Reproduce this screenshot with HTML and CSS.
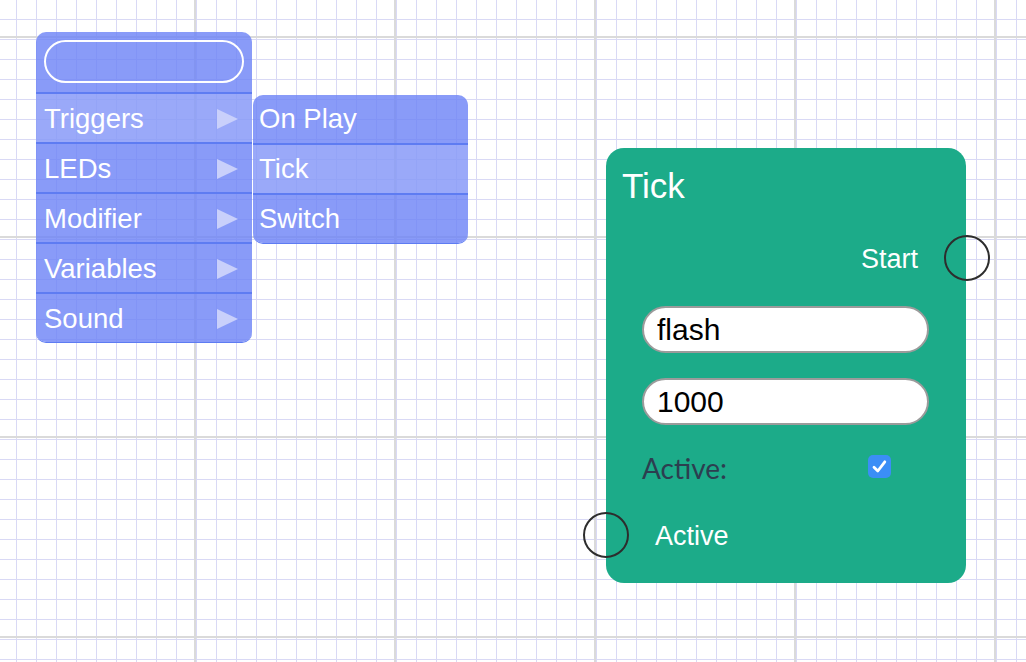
FILE: index.html
```html
<!DOCTYPE html>
<html>
<head>
<meta charset="utf-8">
<link rel="stylesheet" href="styles.css">
</head>
<body>
<div class="canvas">
  <div class="menu">
    <div class="menu-search"><input class="search-input" type="text" value=""></div>
    <div class="menu-row active"><span>Triggers</span><span class="arrow"></span></div>
    <div class="menu-row"><span>LEDs</span><span class="arrow"></span></div>
    <div class="menu-row"><span>Modifier</span><span class="arrow"></span></div>
    <div class="menu-row"><span>Variables</span><span class="arrow"></span></div>
    <div class="menu-row"><span>Sound</span><span class="arrow"></span></div>
  </div>
  <div class="submenu">
    <div class="sub-row first"><span>On Play</span></div>
    <div class="sub-row active"><span>Tick</span></div>
    <div class="sub-row"><span>Switch</span></div>
  </div>

  <div class="node">
    <div class="node-title">Tick</div>
    <div class="node-output">
      <span>Start</span>
      <span class="socket socket-right"></span>
    </div>
    <input class="node-input first" type="text" value="flash">
    <input class="node-input" type="text" value="1000">
    <div class="node-option">
      <span class="option-label">Active:</span>
      <span class="checkbox"><svg width="23" height="23" viewBox="0 0 23 23"><path d="M6 12.2 L9.8 16 L16.8 6.8" fill="none" stroke="#fff" stroke-width="2.8" stroke-linecap="round" stroke-linejoin="round"/></svg></span>
    </div>
    <div class="node-input-socket">
      <span class="socket socket-left"></span>
      <span>Active</span>
    </div>
  </div>
</div>
</body>
</html>
```

FILE: styles.css
```css
html, body {
  margin: 0;
  padding: 0;
  width: 100%;
  height: 100%;
  overflow: hidden;
  background: #fff;
  font-family: "Liberation Sans", Arial, sans-serif;
}

.canvas {
  position: relative;
  width: 1026px;
  height: 662px;
  background-color: #fff;
  background-image:
    linear-gradient(to right, #dadada 2px, transparent 2px),
    linear-gradient(to bottom, #dadada 2px, transparent 2px),
    linear-gradient(to right, #d9d9f5 1px, transparent 1px),
    linear-gradient(to bottom, #d9d9f5 1px, transparent 1px);
  background-size: 200px 200px, 200px 200px, 20px 20px, 20px 20px;
  background-position: 194px 0, 0 36px, 16px 0, 0 19px;
}

/* context menu */
.menu {
  position: absolute;
  left: 36px;
  top: 32px;
  width: 216px;
  border-radius: 10px;
  background: rgba(108, 130, 246, 0.8);
  box-shadow: 0 1px 0 #5e7cf2;
  color: #fff;
  font-size: 27.5px;
}

.menu-search {
  height: 60px;
  padding: 8px;
  box-sizing: border-box;
}

.search-input {
  display: block;
  width: 200px;
  height: 43px;
  box-sizing: border-box;
  border: 2px solid #fff;
  border-radius: 22px;
  background: transparent;
  outline: none;
  padding: 0 14px;
  font: inherit;
  color: #fff;
}

.menu-row {
  height: 50px;
  box-sizing: border-box;
  border-top: 2px solid #5e7cf2;
  display: flex;
  align-items: center;
  justify-content: space-between;
  padding: 1px 14px 0 8px;
}

.menu-row:last-child {
  border-bottom-left-radius: 10px;
  border-bottom-right-radius: 10px;
}

.active {
  background: rgba(255, 255, 255, 0.15);
}

.arrow {
  width: 0;
  height: 0;
  border-top: 10px solid transparent;
  border-bottom: 10px solid transparent;
  border-left: 21px solid #c9d0fb;
}

.submenu {
  position: absolute;
  left: 253px;
  top: 95px;
  width: 215px;
  border-radius: 10px;
  background: rgba(108, 130, 246, 0.8);
  box-shadow: 0 1px 0 #5e7cf2;
  color: #fff;
  font-size: 27.5px;
  overflow: hidden;
}

.sub-row {
  height: 50px;
  box-sizing: border-box;
  border-top: 2px solid #5e7cf2;
  display: flex;
  align-items: center;
  padding: 0 7px 0 6px;
}

.sub-row.first {
  height: 48px;
  border-top: none;
}

/* node */
.node {
  position: absolute;
  left: 606px;
  top: 148px;
  width: 360px;
  height: 435px;
  box-sizing: border-box;
  border-radius: 18px;
  background: #1cab89;
  color: #fff;
  padding-top: 18px;
}

.node-title {
  font-size: 35px;
  line-height: 40px;
  padding-left: 16px;
}

.node-output {
  position: relative;
  margin-top: 33px;
  height: 40px;
  line-height: 40px;
  font-size: 27px;
  text-align: right;
  padding-right: 48px;
}

.socket {
  position: absolute;
  width: 46px;
  height: 46px;
  box-sizing: border-box;
  border: 2px solid #2d2d2d;
  border-radius: 50%;
  top: -4px;
}

.socket-right {
  right: -24px;
}

.socket-left {
  left: -23px;
}

.node-input {
  display: block;
  margin: 25px 0 0 36px;
  width: 287px;
  height: 47px;
  box-sizing: border-box;
  border: 2px solid #9b9b9b;
  border-radius: 24px;
  background: #fff;
  outline: none;
  padding: 0 13px;
  font-family: "Liberation Sans", Arial, sans-serif;
  font-size: 30px;
  color: #000;
}

.node-input.first {
  margin-top: 27px;
}

.node-option {
  display: flex;
  align-items: center;
  margin-top: 23px;
  height: 40px;
  padding-left: 36px;
}

.option-label {
  font-family: Lato, "Liberation Sans", sans-serif;
  font-size: 28px;
  color: #2c3e50;
  width: 226px;
}

.checkbox {
  width: 23px;
  height: 23px;
  border-radius: 5px;
  background: #3b8ef6;
  display: block;
  margin-top: -3px;
}

.checkbox svg {
  display: block;
}

.node-input-socket {
  position: relative;
  margin-top: 28px;
  height: 40px;
  line-height: 40px;
  font-size: 27px;
  padding-left: 49px;
}
```
